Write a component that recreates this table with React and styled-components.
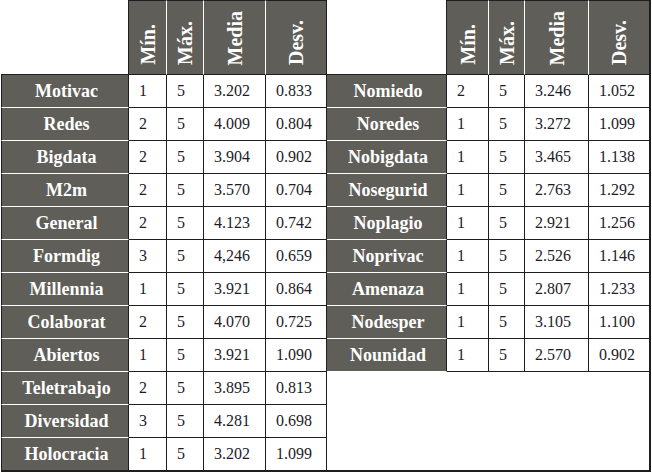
import React from "react";
import styled, { createGlobalStyle } from "styled-components";

const Global = createGlobalStyle`
  html, body { margin: 0; padding: 0; background: #ffffff; }
  body { font-family: "Liberation Serif", "Times New Roman", serif; }
`;

const GRAY = "#5f5e58";
const LINE = "#1e1e1e";

const Page = styled.div`
  display: flex;
  align-items: flex-start;
  margin-left: 1px;
  width: 650px;
`;

const Side = styled.div`
  display: flex;
  flex-direction: column;
`;

const Table = styled.div`
  display: grid;
  grid-template-columns: ${(p) => p.$cols};
  grid-template-rows: 75px;
  grid-auto-rows: 33px;
`;

const Corner = styled.div`
  box-sizing: border-box;
  border-bottom: 1px solid ${LINE};
  border-right: 1px solid ${LINE};
`;

const HeadCell = styled.div`
  box-sizing: border-box;
  background: ${GRAY};
  border-top: 1px solid ${LINE};
  border-bottom: 1px solid ${LINE};
  border-right: ${(p) => (p.$last ? `${p.$edge}px solid ${LINE}` : "1px solid #ffffff")};
  display: flex;
  flex-direction: column;
  justify-content: flex-end;
  align-items: center;
  padding-bottom: 9px;
`;

const HeadText = styled.span`
  writing-mode: vertical-rl;
  transform: rotate(180deg);
  color: #ffffff;
  font-weight: 700;
  font-size: 20px;
  line-height: 1;
  white-space: nowrap;
`;

const Label = styled.div`
  box-sizing: border-box;
  background: ${GRAY};
  border-left: ${(p) => (p.$first ? `1px solid ${LINE}` : "none")};
  border-right: 1px solid ${LINE};
  border-bottom: ${(p) => (p.$bottom ? `2px solid ${LINE}` : "1px solid #ffffff")};
  display: flex;
  align-items: center;
  justify-content: center;
  color: #ffffff;
  font-weight: 700;
  font-size: 18px;
  padding-left: 3px;
  white-space: nowrap;
`;

const Cell = styled.div`
  box-sizing: border-box;
  border-right: ${(p) => `${p.$edge || 1}px solid ${LINE}`};
  border-bottom: ${(p) => (p.$bottom ? `2px solid ${LINE}` : `1px solid ${LINE}`)};
  display: flex;
  align-items: center;
  padding-left: 10px;
  color: #1c1c28;
  font-size: 16px;
  white-space: nowrap;
`;

const Blank = styled.div`
  box-sizing: border-box;
  height: 100px;
  border-right: 2px solid ${LINE};
  border-bottom: 2px solid ${LINE};
`;

const HEADERS = ["Mín.", "Máx.", "Media", "Desv."];

const LEFT = [
  ["Motivac", "1", "5", "3.202", "0.833"],
  ["Redes", "2", "5", "4.009", "0.804"],
  ["Bigdata", "2", "5", "3.904", "0.902"],
  ["M2m", "2", "5", "3.570", "0.704"],
  ["General", "2", "5", "4.123", "0.742"],
  ["Formdig", "3", "5", "4,246", "0.659"],
  ["Millennia", "1", "5", "3.921", "0.864"],
  ["Colaborat", "2", "5", "4.070", "0.725"],
  ["Abiertos", "1", "5", "3.921", "1.090"],
  ["Teletrabajo", "2", "5", "3.895", "0.813"],
  ["Diversidad", "3", "5", "4.281", "0.698"],
  ["Holocracia", "1", "5", "3.202", "1.099"],
];

const RIGHT = [
  ["Nomiedo", "2", "5", "3.246", "1.052"],
  ["Noredes", "1", "5", "3.272", "1.099"],
  ["Nobigdata", "1", "5", "3.465", "1.138"],
  ["Nosegurid", "1", "5", "2.763", "1.292"],
  ["Noplagio", "1", "5", "2.921", "1.256"],
  ["Noprivac", "1", "5", "2.526", "1.146"],
  ["Amenaza", "1", "5", "2.807", "1.233"],
  ["Nodesper", "1", "5", "3.105", "1.100"],
  ["Nounidad", "1", "5", "2.570", "0.902"],
];

function StatsTable({ rows, cols, first, edge, closed }) {
  return (
    <Table $cols={cols}>
      <Corner />
      {HEADERS.map((h, i) => (
        <HeadCell key={h} $last={i === 3} $edge={edge}>
          <HeadText>{h}</HeadText>
        </HeadCell>
      ))}
      {rows.map((r, ri) => {
        const bottom = closed && ri === rows.length - 1;
        return (
          <React.Fragment key={r[0]}>
            <Label $first={first} $bottom={bottom} style={bottom ? { height: 34 } : undefined}>
              {r[0]}
            </Label>
            {r.slice(1).map((v, ci) => (
              <Cell
                key={ci}
                $edge={ci === 3 ? edge : 1}
                $bottom={bottom}
                style={bottom ? { height: 34 } : undefined}
              >
                {v}
              </Cell>
            ))}
          </React.Fragment>
        );
      })}
    </Table>
  );
}

export default function App() {
  return (
    <>
      <Global />
      <Page>
        <StatsTable rows={LEFT} cols="128px 38px 37px 62px 61px" first edge={1} closed />
        <Side>
          <StatsTable rows={RIGHT} cols="120px 42px 36px 64px 62px" edge={2} />
          <Blank />
        </Side>
      </Page>
    </>
  );
}
